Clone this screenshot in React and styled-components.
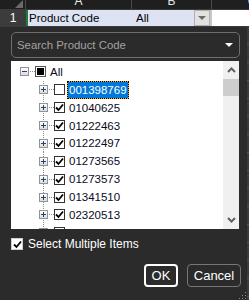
import styled, { createGlobalStyle } from "styled-components"

const GlobalStyle = createGlobalStyle`
    html, body {
        margin: 0;
        padding: 0;
        background: #2b2b2b;
        overflow: hidden;
    }
`

const Sheet = styled.div`
    width: 249px;
    height: 300px;
    display: flex;
    flex-direction: column;
    font-family: "Liberation Sans", Arial, sans-serif;
    overflow: hidden;
`

const HeaderRow = styled.div`
    display: grid;
    grid-template-columns: 26px 106px 80px 1fr;
    height: 9px;
    background: #1f1f1f;
    overflow: hidden;
`

const HeadCell = styled.div`
    display: flex;
    align-items: flex-end;
    justify-content: center;
    color: #e6e6e6;
    font-size: 12px;
    line-height: 12px;
    padding-bottom: 2px;
    border-right: 1px solid #4a4a4a;
    overflow: hidden;
    padding-left: ${p => p.$shift || 0}px;
`

const Corner = styled.div`
    border-right: 1px solid #4a4a4a;
    display: flex;
    justify-content: flex-end;
    align-items: flex-end;
    padding: 0 2px 1px 0;

    &::after {
        content: "";
        width: 0;
        height: 0;
        border-left: 8px solid transparent;
        border-bottom: 8px solid #6a6a6a;
    }
`

const DataRow = styled.div`
    display: grid;
    grid-template-columns: 26px 106px 62px 16px 2px 1fr;
    height: 16px;
    border-top: 1px solid #3a3a3a;
    border-bottom: 1px solid #3a3a3a;
    font-size: 11.5px;
`

const RowHead = styled.div`
    background: #3c3c3c;
    color: #ffffff;
    display: flex;
    align-items: center;
    justify-content: center;
    font-size: 12px;
`

const Cell = styled.div`
    background: ${p => p.$bg || "#dde3f3"};
    color: #000;
    display: flex;
    align-items: center;
    padding-left: ${p => p.$pad || 3}px;
    border-left: ${p => (p.$active ? "2px solid #1e7b45" : "none")};
    white-space: nowrap;
    overflow: hidden;
`

const DropBtn = styled.div`
    background: #e1e1e1;
    border: 1px solid #b0b0b0;
    display: flex;
    align-items: center;
    justify-content: center;

    &::after {
        content: "";
        border-left: 4px solid transparent;
        border-right: 4px solid transparent;
        border-top: 4px solid #6a6a6a;
    }
`

const Gap = styled.div`
    background: #c8c8c8;
`

const Lower = styled.div`
    flex: 1;
    display: flex;
`

const Popup = styled.div`
    width: 247px;
    background: #2b2b2b;
    display: flex;
    flex-direction: column;
    padding: 5px 8px 0 11px;
    box-sizing: border-box;
    position: relative;
`

const Edge = styled.div`
    flex: 1;
    background: repeating-linear-gradient(to bottom, #3b3b3b 0 17px, #555 17px 18px);
`

const Search = styled.div`
    height: 26px;
    border: 1px solid #6e6e6e;
    border-radius: 5px;
    box-sizing: border-box;
    display: flex;
    align-items: center;
    justify-content: space-between;
    padding: 0 6px 0 5px;
    margin-right: -1px;
    color: #a2a2a2;
    font-size: 11.4px;

    &::after {
        content: "";
        border-left: 4px solid transparent;
        border-right: 4px solid transparent;
        border-top: 4px solid #ffffff;
    }
`

const TreeBox = styled.div`
    margin-top: 3px;
    height: 168px;
    background: #ffffff;
    display: flex;
    overflow: hidden;
`

const TreeList = styled.div`
    flex: 1;
    padding-top: 2px;
    overflow: hidden;
`

const TreeRow = styled.div`
    height: 17.875px;
    display: flex;
    align-items: center;
    padding-left: ${p => p.$indent}px;
    font-size: 11.5px;
    color: #0a0a1e;
`

const Branch = styled.div`
    width: 9px;
    height: 100%;
    display: flex;
    align-items: center;
    background: ${p =>
        p.$line
            ? "repeating-linear-gradient(to bottom, #8a8a8a 0 1px, transparent 1px 2px) 4px 0 / 1px 100% no-repeat"
            : "none"};
`

const Expander = styled.span`
    width: 9px;
    height: 9px;
    box-sizing: border-box;
    border: 1px solid #939393;
    background: linear-gradient(#ffffff, #dcdcdc);
    display: flex;
    align-items: center;
    justify-content: center;
`

const HDots = styled.span`
    width: 6px;
    height: 1px;
    background: repeating-linear-gradient(to right, transparent 0 1px, #8a8a8a 1px 2px);
`

const Box = styled.span`
    width: 11px;
    height: 11px;
    box-sizing: border-box;
    border: 1px solid ${p => p.$border || "#333"};
    background: #ffffff;
    display: flex;
    align-items: center;
    justify-content: center;
    flex-shrink: 0;
`

const Fill = styled.span`
    width: 7px;
    height: 7px;
    background: #000;
`

const Label = styled.span`
    margin-left: 2px;
    padding: 1px;
    line-height: 14px;
    white-space: nowrap;
    border: 1px solid transparent;
    ${p =>
        p.$selected &&
        `
        color: #ffffff;
        border: 1px dotted #000;
        background: linear-gradient(#0078d7, #0078d7) padding-box, #f0a23c border-box;
    `}
`

const Scrollbar = styled.div`
    width: 16px;
    background: #f0f0f0;
    display: flex;
    flex-direction: column;
`

const Arrow = styled.div`
    height: 18px;
    display: flex;
    align-items: center;
    justify-content: center;
`

const Thumb = styled.div`
    height: 17px;
    background: #cdcdcd;
`

const Track = styled.div`
    flex: 1;
`

const MultiRow = styled.div`
    margin-top: 9px;
    display: flex;
    align-items: center;
    gap: 5px;
    color: #ffffff;
    font-size: 12px;
    line-height: 14px;
    height: 12px;
`

const BigBox = styled.span`
    width: 12px;
    height: 12px;
    box-sizing: border-box;
    border: 1px solid #d0d0d0;
    background: #ffffff;
    display: flex;
    align-items: center;
    justify-content: center;
    flex-shrink: 0;
`

const Buttons = styled.div`
    margin-top: 14px;
    margin-right: -2px;
    display: flex;
    justify-content: flex-end;
    gap: 9px;
`

const Button = styled.button`
    height: 23px;
    width: ${p => p.$w}px;
    box-sizing: border-box;
    background: #2b2b2b;
    color: #ffffff;
    border: ${p => (p.$primary ? "2px solid #ffffff" : "1px solid #767676")};
    border-radius: 4px;
    font-family: "Liberation Sans", Arial, sans-serif;
    font-size: 13px;
    padding: 0;
`

const Grip = styled.div`
    position: absolute;
    right: 1px;
    bottom: 1px;
    width: 8px;
    height: 8px;
    background: radial-gradient(circle, #8a8a8a 0 0.8px, transparent 1px) 0 0 / 3px 3px;
    clip-path: polygon(100% 0, 100% 100%, 0 100%);
`

const Check = ({ size = 9 }) => (
    <svg width={size} height={size} viewBox="0 0 9 9">
        <path d="M1 4.5 L3.5 7 L8 1.5" fill="none" stroke="#000" strokeWidth="1.8" />
    </svg>
)

const Sign = ({ minus }) => (
    <svg width="5" height="5" viewBox="0 0 5 5">
        <rect x="0" y="2" width="5" height="1" fill="#24427e" />
        {!minus && <rect x="2" y="0" width="1" height="5" fill="#24427e" />}
    </svg>
)

const Chevron = ({ down }) => (
    <svg width="9" height="6" viewBox="0 0 9 6">
        <path
            d={down ? "M1 1 L4.5 4.5 L8 1" : "M1 5 L4.5 1.5 L8 5"}
            fill="none"
            stroke="#606060"
            strokeWidth="2"
        />
    </svg>
)

const codes = [
    "001398769",
    "01040625",
    "01222463",
    "01222497",
    "01273565",
    "01273573",
    "01341510",
    "02320513",
    "02320547",
]

const App = () => {
    return (
        <>
            <GlobalStyle />
            <Sheet>
                <HeaderRow>
                    <Corner />
                    <HeadCell>A</HeadCell>
                    <HeadCell>B</HeadCell>
                    <HeadCell $shift={40}>C</HeadCell>
                </HeaderRow>
                <DataRow>
                    <RowHead>1</RowHead>
                    <Cell $active $pad={1}>Product Code</Cell>
                    <Cell $pad={4}>All</Cell>
                    <DropBtn />
                    <Gap />
                    <Cell $bg="#ffffff" />
                </DataRow>
                <Lower>
                    <Popup>
                        <Search>Search Product Code</Search>
                        <TreeBox>
                            <TreeList>
                                <TreeRow $indent={9}>
                                    <Branch>
                                        <Expander><Sign minus /></Expander>
                                    </Branch>
                                    <HDots />
                                    <Box $border="#555"><Fill /></Box>
                                    <Label>All</Label>
                                </TreeRow>
                                {codes.map((code, i) => (
                                    <TreeRow key={code} $indent={28}>
                                        <Branch $line>
                                            <Expander><Sign /></Expander>
                                        </Branch>
                                        <HDots />
                                        <Box>{i > 0 && <Check />}</Box>
                                        <Label $selected={i === 0}>{code}</Label>
                                    </TreeRow>
                                ))}
                            </TreeList>
                            <Scrollbar>
                                <Arrow><Chevron /></Arrow>
                                <Thumb />
                                <Track />
                                <Arrow><Chevron down /></Arrow>
                            </Scrollbar>
                        </TreeBox>
                        <MultiRow>
                            <BigBox><Check size={9} /></BigBox>
                            <span>Select Multiple Items</span>
                        </MultiRow>
                        <Buttons>
                            <Button $primary $w={34}>OK</Button>
                            <Button $w={54}>Cancel</Button>
                        </Buttons>
                        <Grip />
                    </Popup>
                    <Edge />
                </Lower>
            </Sheet>
        </>
    )
}

export default App
